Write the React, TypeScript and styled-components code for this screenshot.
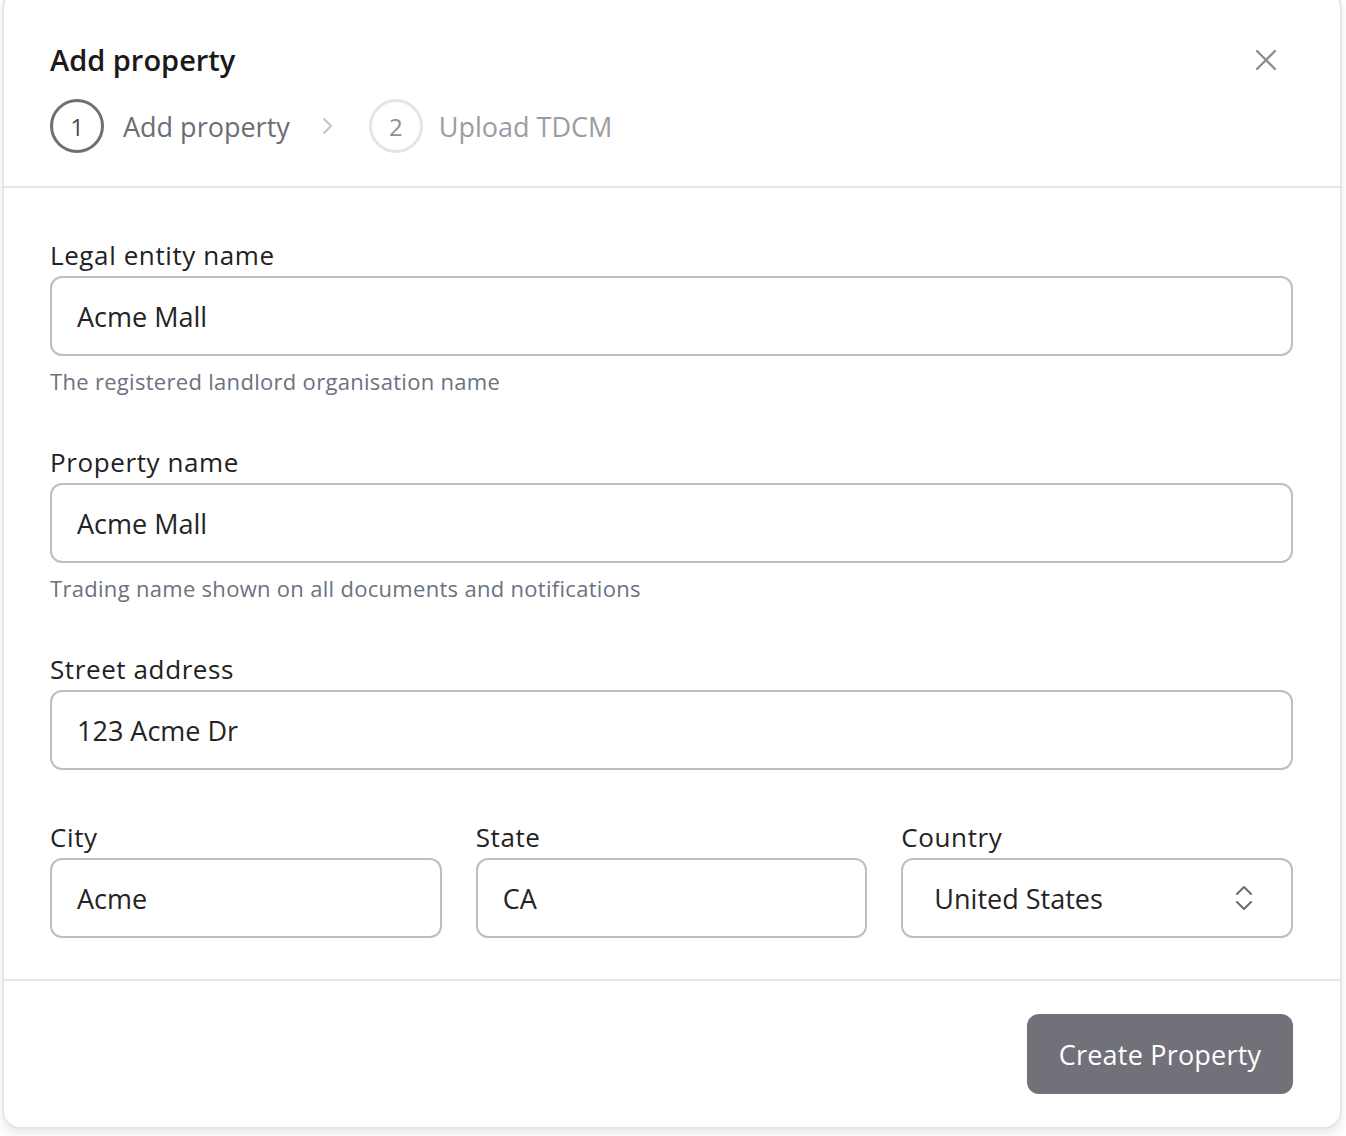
import styled, { createGlobalStyle } from "styled-components";

const GlobalStyle = createGlobalStyle`
  body {
    margin: 0;
    background: #ffffff;
    font-family: "Open Sans", "Liberation Sans", sans-serif;
  }
  * {
    box-sizing: border-box;
  }
`;

const Page = styled.div`
  padding-left: 2px;
  overflow: hidden;
  height: 1136px;
`;

const Modal = styled.div`
  width: 1340px;
  margin-top: -10px;
  background: #ffffff;
  border: 2px solid #e6e6e8;
  border-radius: 18px;
  box-shadow: 0 6px 10px rgba(0, 0, 0, 0.08);
`;

const Header = styled.div`
  padding: 50px 47px 33px 46px;
  border-bottom: 2px solid #e6e6e8;
`;

const TitleRow = styled.div`
  display: flex;
  align-items: center;
  justify-content: space-between;
  height: 36px;
  margin-bottom: 21px;
`;

const Title = styled.h2`
  margin: 0;
  font-size: 29px;
  line-height: 36px;
  font-weight: 600;
  color: #1a1a1a;
`;

const CloseButton = styled.button`
  border: none;
  background: none;
  padding: 0;
  margin-right: 17px;
  width: 20px;
  height: 20px;
  display: flex;
  color: #8e8e96;
  cursor: pointer;
`;

const Stepper = styled.div`
  display: flex;
  align-items: center;
`;

const StepCircle = styled.div<{ $active?: boolean }>`
  width: 54px;
  height: 54px;
  flex-shrink: 0;
  border-radius: 50%;
  border: 3px solid ${(p) => (p.$active ? "#6e6e76" : "#e4e4e7")};
  display: flex;
  align-items: center;
  justify-content: center;
  font-size: 24px;
  color: ${(p) => (p.$active ? "#4a4a50" : "#8e8e96")};
`;

const StepLabel = styled.span<{ $active?: boolean }>`
  margin-left: ${(p) => (p.$active ? "19px" : "16px")};
  font-size: 27px;
  color: ${(p) => (p.$active ? "#6b6e76" : "#9a9ca3")};
`;

const StepChevron = styled.span`
  display: flex;
  margin: 0 35px 0 32px;
  color: #c4c4c8;
`;

const Body = styled.div`
  padding: 51px 47px 41px 46px;
  display: flex;
  flex-direction: column;
  gap: 51px;
  border-bottom: 2px solid #e6e6e8;
`;

const Field = styled.div`
  display: flex;
  flex-direction: column;
`;

const Label = styled.label`
  font-size: 26px;
  line-height: 32px;
  font-weight: 500;
  color: #222222;
  margin-bottom: 5px;
  letter-spacing: 0.6px;
`;

const Input = styled.div<{ $wide?: boolean }>`
  height: 80px;
  flex-shrink: 0;
  border: 2px solid #bdbdc2;
  border-radius: 12px;
  display: flex;
  align-items: center;
  justify-content: space-between;
  padding: 0 38px 0 ${(p) => (p.$wide ? "31px" : "25px")};
  font-size: 27px;
  font-weight: 500;
  color: #242424;
`;

const Help = styled.div`
  margin-top: 11px;
  font-size: 22px;
  line-height: 28px;
  color: #6b7280;
  letter-spacing: 0.3px;
`;

const Row = styled.div`
  display: grid;
  grid-template-columns: repeat(3, 1fr);
  gap: 34px;
`;

const Footer = styled.div`
  padding: 33px 47px 33px 46px;
  display: flex;
  justify-content: flex-end;
`;

const PrimaryButton = styled.button`
  height: 80px;
  width: 266px;
  border: none;
  border-radius: 12px;
  background: #71717a;
  color: #ffffff;
  font-family: inherit;
  font-size: 27px;
  font-weight: 500;
  letter-spacing: 0.2px;
  cursor: pointer;
`;

const CloseIcon = () => (
  <svg width="20" height="20" viewBox="0 0 20 20" fill="none">
    <path d="M1 1L19 19M19 1L1 19" stroke="currentColor" strokeWidth="2.4" strokeLinecap="round" />
  </svg>
);

const ChevronRight = () => (
  <svg width="12" height="18" viewBox="0 0 12 18" fill="none">
    <path d="M2 2L9 9L2 16" stroke="currentColor" strokeWidth="2" strokeLinecap="round" strokeLinejoin="round" />
  </svg>
);

const ChevronsUpDown = () => (
  <svg width="18" height="28" viewBox="0 0 18 28" fill="none">
    <path
      d="M2 10L9 3L16 10M2 18L9 25L16 18"
      stroke="#6b6b73"
      strokeWidth="2"
      strokeLinecap="round"
      strokeLinejoin="round"
    />
  </svg>
);

export default function App() {
  return (
    <Page>
      <GlobalStyle />
      <Modal>
        <Header>
          <TitleRow>
            <Title>Add property</Title>
            <CloseButton aria-label="Close">
              <CloseIcon />
            </CloseButton>
          </TitleRow>
          <Stepper>
            <StepCircle $active>1</StepCircle>
            <StepLabel $active>Add property</StepLabel>
            <StepChevron>
              <ChevronRight />
            </StepChevron>
            <StepCircle>2</StepCircle>
            <StepLabel>Upload TDCM</StepLabel>
          </Stepper>
        </Header>
        <Body>
          <Field>
            <Label>Legal entity name</Label>
            <Input>Acme Mall</Input>
            <Help>The registered landlord organisation name</Help>
          </Field>
          <Field>
            <Label>Property name</Label>
            <Input>Acme Mall</Input>
            <Help>Trading name shown on all documents and notifications</Help>
          </Field>
          <Field>
            <Label>Street address</Label>
            <Input>123 Acme Dr</Input>
          </Field>
          <Row>
            <Field>
              <Label>City</Label>
              <Input>Acme</Input>
            </Field>
            <Field>
              <Label>State</Label>
              <Input>CA</Input>
            </Field>
            <Field>
              <Label>Country</Label>
              <Input $wide>
                United States
                <ChevronsUpDown />
              </Input>
            </Field>
          </Row>
        </Body>
        <Footer>
          <PrimaryButton>Create Property</PrimaryButton>
        </Footer>
      </Modal>
    </Page>
  );
}
